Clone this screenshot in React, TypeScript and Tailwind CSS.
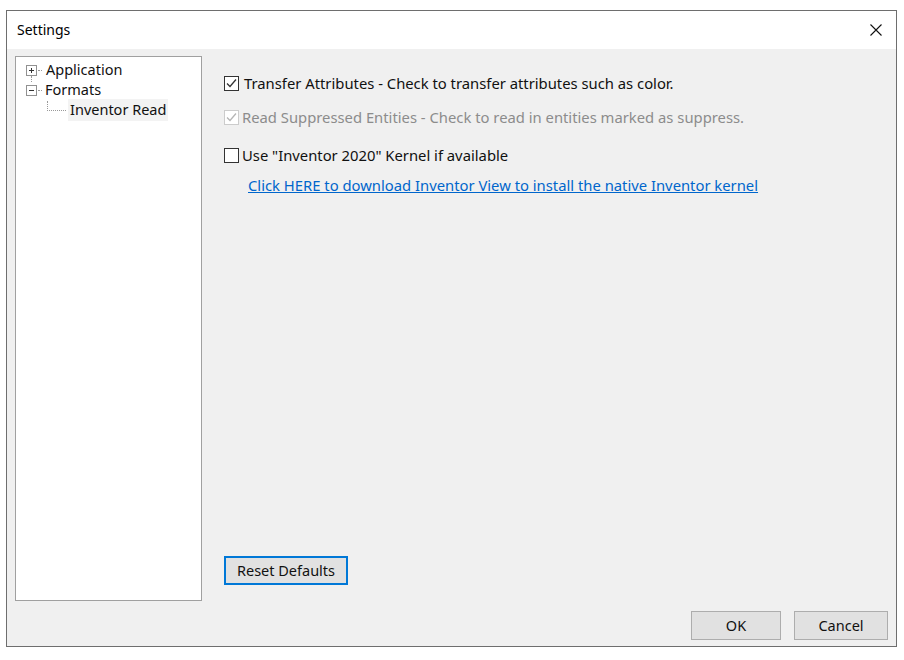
import React from 'react';

const font = { fontFamily: '"Noto Sans", "Open Sans", sans-serif' };

function TreeToggle({ open }: { open: boolean }) {
  return (
    <svg width="11" height="11" viewBox="0 0 11 11" className="shrink-0">
      <rect x="0.5" y="0.5" width="10" height="10" fill="#fff" stroke="#919191" />
      <line x1="3" y1="5.5" x2="8" y2="5.5" stroke="#333" />
      {!open && <line x1="5.5" y1="3" x2="5.5" y2="8" stroke="#333" />}
    </svg>
  );
}

function CheckBox({ checked, disabled }: { checked: boolean; disabled?: boolean }) {
  return (
    <span
      className={`flex h-[15px] w-[15px] shrink-0 items-center justify-center border bg-white ${
        disabled ? 'border-[#cccccc]' : 'border-[#333333]'
      }`}
    >
      {checked && (
        <svg width="11" height="11" viewBox="0 0 11 11">
          <path
            d="M1 5.5 L4 8.5 L10 1.5"
            fill="none"
            stroke={disabled ? '#b5b5b5' : '#333'}
            strokeWidth="1.3"
          />
        </svg>
      )}
    </span>
  );
}

export default function App() {
  return (
    <div className="h-[660px] w-[904px] bg-white pl-[6px] pt-[10px]" style={font}>
      <div className="flex h-[637px] w-[891px] flex-col border border-[#6e6e6e]">
        <div className="flex h-[38px] items-center justify-between bg-white pb-[1px] pl-[10px] pr-[14px] text-[14px] text-black">
          <span>Settings</span>
          <svg width="12" height="12" viewBox="0 0 12 12">
            <path d="M0.5 0.5 L11.5 11.5 M11.5 0.5 L0.5 11.5" stroke="#111" strokeWidth="1.1" />
          </svg>
        </div>
        <div className="flex flex-1 flex-col bg-[#f0f0f0]">
          <div className="flex flex-1 pl-[8px] pt-[7px]">
            <div className="relative h-[545px] w-[187px] border border-[#a0a0a0] bg-white pl-[10px] pt-[3px] text-[14.5px] text-[#111]">
              <div className="flex h-[20px] items-center">
                <TreeToggle open={false} />
                <span className="ml-[1px] w-[4px] border-t border-dotted border-[#999]" />
                <span className="ml-[4px]">Application</span>
              </div>
              <div className="flex h-[20px] items-center">
                <TreeToggle open />
                <span className="ml-[1px] w-[4px] border-t border-dotted border-[#999]" />
                <span className="ml-[3px]">Formats</span>
              </div>
              <div className="flex h-[20px] items-center pl-[21px]">
                <span className="h-[10px] w-[19px] -translate-y-[4px] border-b border-l border-dotted border-[#999]" />
                <span className="ml-[2px] bg-[#f3f3f3] px-[2px]">Inventor Read</span>
              </div>
              <span className="absolute left-[15px] top-[19px] h-[6px] border-l border-dotted border-[#999]" />
            </div>
            <div className="flex flex-1 flex-col pl-[22px] pt-[11px] text-[14.8px]">
              <label className="flex h-[32px] items-center gap-[5px] text-[#111]">
                <CheckBox checked />
                <span>Transfer Attributes - Check to transfer attributes such as color.</span>
              </label>
              <label className="flex h-[36px] items-center gap-[3px] text-[#8c8c8c]">
                <CheckBox checked disabled />
                <span>Read Suppressed Entities - Check to read in entities marked as suppress.</span>
              </label>
              <label className="mt-[5px] flex h-[30px] items-center gap-[3px] text-[#111]">
                <CheckBox checked={false} />
                <span>Use "Inventor 2020" Kernel if available</span>
              </label>
              <a className="ml-[24px] mt-[4px] text-[#0066cc] underline" href="#">
                Click HERE to download Inventor View to install the native Inventor kernel
              </a>
              <div className="flex-1" />
              <button className="mb-[16px] h-[29px] w-[124px] border-2 border-[#0078d7] bg-[#e1e1e1] text-[14.5px] text-[#111]">
                Reset Defaults
              </button>
            </div>
          </div>
          <div className="flex justify-end gap-[13px] pb-[6px] pr-[8px] pt-[10px] text-[14.5px] text-[#111]">
            <button className="h-[29px] w-[90px] border border-[#adadad] bg-[#e1e1e1]">OK</button>
            <button className="h-[29px] w-[94px] border border-[#adadad] bg-[#e1e1e1]">Cancel</button>
          </div>
        </div>
      </div>
    </div>
  );
}
